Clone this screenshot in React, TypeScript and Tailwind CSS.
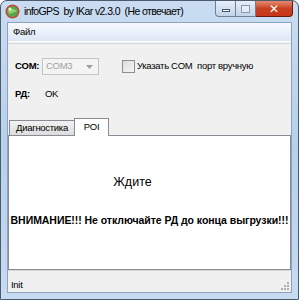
import React from "react";

const font = { fontFamily: "'Liberation Sans', Arial, sans-serif" };

export default function App() {
  return (
    <div className="w-[299px] h-[300px] overflow-hidden bg-white">
      <div className="w-[299px] h-[300px] flex flex-col rounded-t-[7px] border border-[#4c5a6e] bg-gradient-to-b from-[#c9dcf1] via-[#b8d0ea] to-[#c7dbf1]" style={font}>
        {/* Title bar */}
        <div className="h-[21px] flex items-start relative">
          <div className="flex items-center h-[21px] pl-[4px] gap-[4px]">
            <svg width="15" height="15" viewBox="0 0 15 15">
              <circle cx="7.5" cy="7.5" r="7" fill="#c8463a" />
              <circle cx="7.5" cy="7.5" r="5.5" fill="#5aa44a" />
              <path d="M3 6 Q7 3 12 7 Q8 9 4 10 Z" fill="#8fd06f" />
              <circle cx="5" cy="5" r="1.6" fill="#e9f5e0" />
            </svg>
            <span className="text-[10.5px] tracking-[-0.6px] text-black whitespace-pre leading-none">
              infoGPS  by IKar v2.3.0  (Не отвечает)
            </span>
          </div>
          <div className="ml-auto flex items-start mr-[5px]">
            <div className="w-[21px] h-[16px] border border-[#6d7f9a] border-t-0 rounded-bl-[4px] bg-gradient-to-b from-[#e6eef8] to-[#c3d3e8] flex items-center justify-center">
              <div className="w-[8px] h-[3px] bg-white border border-[#44546e] mt-[4px]" />
            </div>
            <div className="w-[20px] h-[16px] border border-[#6d7f9a] border-t-0 border-l-0 bg-gradient-to-b from-[#e6eef8] to-[#c3d3e8] flex items-center justify-center">
              <div className="w-[9px] h-[8px] border border-[#8a9ab0] bg-[#e6edf6]" />
            </div>
            <div className="w-[37px] h-[16px] border border-[#6a1b0e] border-t-0 border-l-0 rounded-br-[4px] bg-gradient-to-b from-[#e28a70] via-[#c9401e] to-[#c8361a] flex items-center justify-center">
              <span className="text-white text-[12px] font-bold leading-none" style={{ fontFamily: "'DejaVu Sans', sans-serif" }}>✕</span>
            </div>
          </div>
        </div>

        {/* Client area */}
        <div className="mx-[6px] h-[271px] flex flex-col bg-[#f0f0f0] border border-[#8da2bb] text-[9.5px] tracking-[-0.3px] text-black">
          {/* Menu */}
          <div className="h-[18px] bg-gradient-to-b from-[#f6f9fd] to-[#dde7f4] flex items-center px-[5px]">
            <span>Файл</span>
          </div>
          <div className="h-[1px] bg-white" />
          <div className="h-[1px] bg-[#f0f0f0]" />
          <div className="h-[1px] bg-[#d8d8d8]" />

          {/* Form */}
          <div className="h-[73px] flex flex-col pl-[7px] pt-[14px]">
            <div className="flex items-center h-[17px]">
              <span className="font-bold w-[27px]">COM:</span>
              <div className="w-[57px] h-[17px] border border-[#c4c4c4] bg-[#f4f4f4] flex items-center pl-[3px] pr-[5px]">
                <span className="text-[#a0a0a0] flex-1">COM3</span>
                <svg width="7" height="4" viewBox="0 0 7 4"><path d="M0 0 L7 0 L3.5 4 Z" fill="#a0a0a0" /></svg>
              </div>
              <div className="ml-[23px] w-[13px] h-[13px] border border-[#8e8f8f] bg-gradient-to-br from-[#dcdcdc] to-[#f6f6f6]" />
              <span className="ml-[2px] whitespace-pre">Указать COM  порт вручную</span>
            </div>
            <div className="flex items-center mt-[14px] h-[11px]">
              <span className="font-bold w-[30px]">РД:</span>
              <span>OK</span>
            </div>
          </div>

          {/* Tabs */}
          <div className="h-[18px] flex items-end pl-[1px]">
            <div className="h-[15px] w-[66px] border border-b-0 border-[#898c95] bg-gradient-to-b from-[#f2f2f2] to-[#dcdcdc] flex items-center justify-center">
              <span>Диагностика</span>
            </div>
            <div className="h-[18px] w-[35px] -ml-[1px] border border-b-0 border-[#898c95] bg-white flex items-center justify-center relative top-[1px]">
              <span>POI</span>
            </div>
          </div>

          {/* Panel */}
          <div className="flex-1 bg-white border border-[#898c95] flex flex-col items-center">
            <div className="mt-[37px] text-[12.5px] tracking-normal mr-[34px]">Ждите</div>
            <div className="mt-[21px] text-[10.5px] tracking-[-0.05px] font-bold whitespace-nowrap">ВНИМАНИЕ!!! Не отключайте РД до конца выгрузки!!!</div>
          </div>

          {/* Status bar */}
          <div className="h-[22px] flex items-center px-[3px] border-t border-[#d7d7d7] relative">
            <span className="mt-[8px]">Init</span>
            <div className="absolute right-[2px] bottom-[2px] grid grid-cols-3 gap-[1px]">
              <div className="w-[2px] h-[2px]" /><div className="w-[2px] h-[2px]" /><div className="w-[2px] h-[2px] bg-[#b0b0b0]" />
              <div className="w-[2px] h-[2px]" /><div className="w-[2px] h-[2px] bg-[#b0b0b0]" /><div className="w-[2px] h-[2px] bg-[#b0b0b0]" />
              <div className="w-[2px] h-[2px] bg-[#b0b0b0]" /><div className="w-[2px] h-[2px] bg-[#b0b0b0]" /><div className="w-[2px] h-[2px] bg-[#b0b0b0]" />
            </div>
          </div>
        </div>
      </div>
    </div>
  );
}
